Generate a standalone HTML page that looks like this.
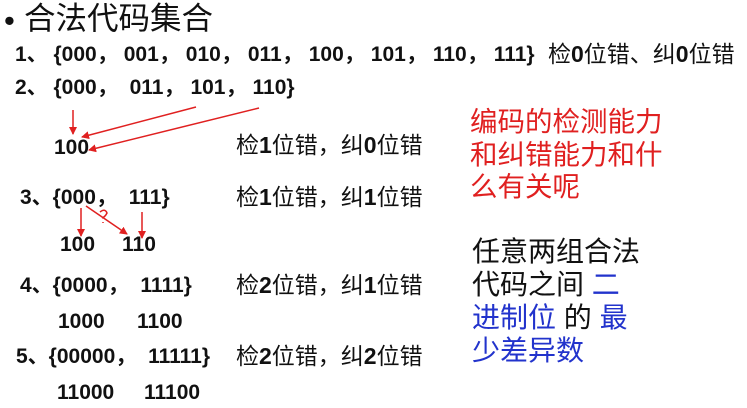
<!DOCTYPE html>
<html><head><meta charset="utf-8"><style>
body{margin:0;width:747px;height:408px;background:#fff;overflow:hidden;position:relative;font-family:"Liberation Sans","Noto Sans CJK SC",sans-serif;}
.a{position:absolute;white-space:nowrap;line-height:1;}
.b{font-weight:bold;font-size:21px;color:#111;}
.c{font-size:23px;color:#111;}
.c b{font-weight:bold}
.q{display:inline-block;width:27px}
.r{font-size:27.5px;color:#e02020;line-height:32.5px;}
.k{font-size:28px;color:#111;line-height:33px;}
.bl{color:#2233cc}
</style></head><body>
<div class="a" style="left:4px;top:5px;font-size:31px;color:#111">•</div>
<div class="a" style="left:24px;top:3px;font-size:31.5px;color:#111">合法代码集合</div>

<div class="a b" style="left:15px;top:44px">1、 {000<span class="q">，</span>001<span class="q">，</span>010<span class="q">，</span>011<span class="q">，</span>100<span class="q">，</span>101<span class="q">，</span>110<span class="q">，</span>111}</div>
<div class="a c" style="left:548px;top:43px">检<b>0</b>位错、纠<b>0</b>位错</div>
<div class="a b" style="left:15px;top:77px">2、 {000<span class="q">，</span> 011<span class="q">，</span>101<span class="q">，</span>110}</div>
<div class="a b" style="left:54px;top:137px">100</div>
<div class="a c" style="left:236px;top:134px">检<b>1</b>位错，纠<b>0</b>位错</div>

<div class="a b" style="left:20px;top:187px">3、{000<span class="q">，</span> 111}</div>
<div class="a c" style="left:236px;top:186px">检<b>1</b>位错，纠<b>1</b>位错</div>
<div class="a b" style="left:60px;top:234px">100</div>
<div class="a b" style="left:122px;top:234px">110</div>

<div class="a b" style="left:20px;top:275px">4、{0000<span class="q">，</span> 1111}</div>
<div class="a c" style="left:236px;top:274px">检<b>2</b>位错，纠<b>1</b>位错</div>
<div class="a b" style="left:58px;top:311px">1000</div>
<div class="a b" style="left:137px;top:311px">1100</div>

<div class="a b" style="left:16px;top:346px">5、{00000<span class="q">，</span> 11111}</div>
<div class="a c" style="left:236px;top:345px">检<b>2</b>位错，纠<b>2</b>位错</div>
<div class="a b" style="left:57px;top:382px">11000</div>
<div class="a b" style="left:144px;top:382px">11100</div>

<div class="a r" style="left:470px;top:106px">编码的检测能力<br>和纠错能力和什<br>么有关呢</div>
<div class="a k" style="left:472px;top:235px">任意两组合法<br>代码之间 <span class="bl">二</span><br><span class="bl">进制位</span> 的 <span class="bl">最</span><br><span class="bl">少差异数</span></div>

<svg class="a" style="left:0;top:0" width="747" height="408">
<defs><marker id="m" markerWidth="8" markerHeight="8" refX="7" refY="4" orient="auto" markerUnits="userSpaceOnUse"><path d="M0,0 L8,4 L0,8 z" fill="#e02020"/></marker></defs>
<g stroke="#e02020" stroke-width="1.5" fill="none">
<line x1="73" y1="110" x2="73" y2="134" marker-end="url(#m)"/>
<line x1="196" y1="107" x2="82" y2="137" marker-end="url(#m)"/>
<line x1="259" y1="108" x2="89" y2="150" marker-end="url(#m)"/>
<line x1="81" y1="208" x2="81" y2="236" marker-end="url(#m)"/>
<line x1="86" y1="206" x2="127" y2="234" marker-end="url(#m)"/>
<line x1="142" y1="212" x2="142" y2="238" marker-end="url(#m)"/>
<path d="M100,212 q5,-4 7,1 q-2,4 -5,5 M103,222 l0,1"/>
</g>
</svg>
</body></html>
